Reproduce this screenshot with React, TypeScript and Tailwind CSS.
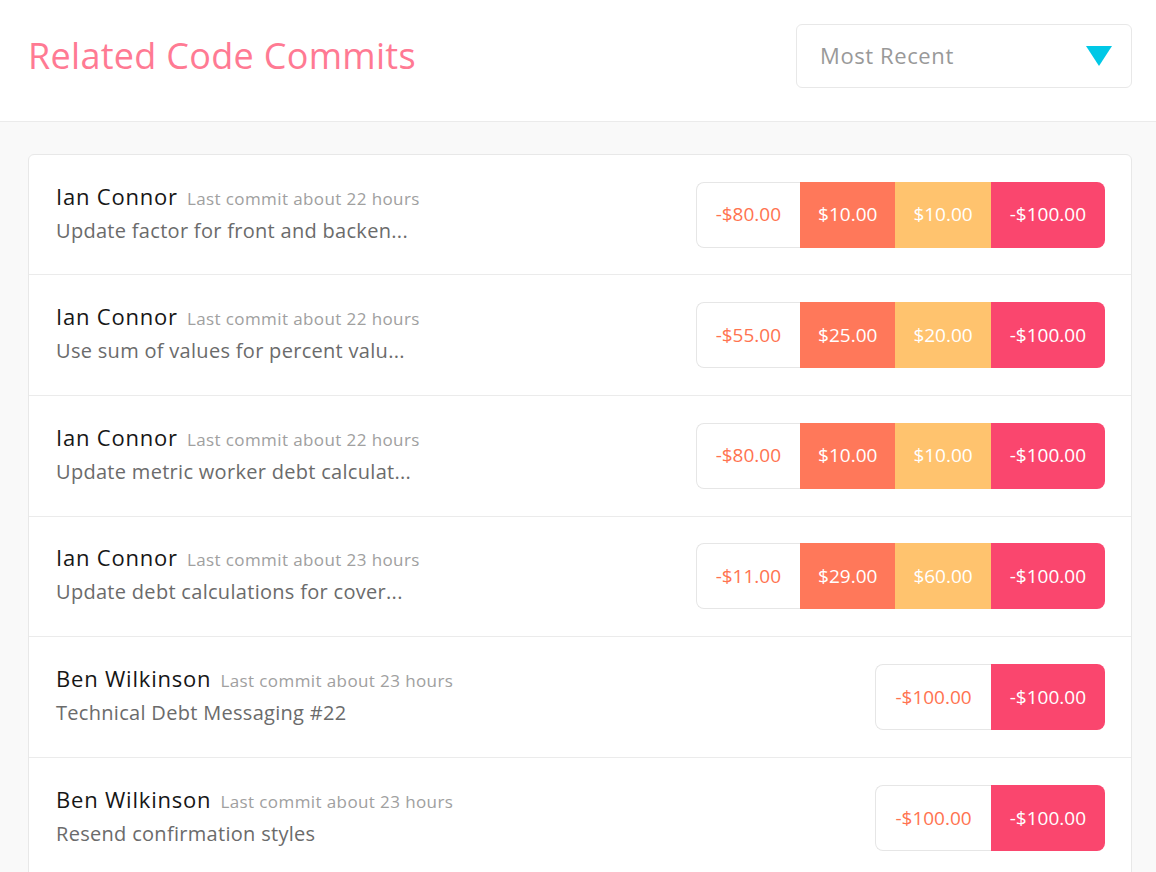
import React from "react";

type Seg = { v: string; c: "w" | "o" | "y" | "r" };
const rows: { name: string; time: string; msg: string; segs: Seg[] }[] = [
  { name: "Ian Connor", time: "Last commit about 22 hours", msg: "Update factor for front and backen...", segs: [{ v: "-$80.00", c: "w" }, { v: "$10.00", c: "o" }, { v: "$10.00", c: "y" }, { v: "-$100.00", c: "r" }] },
  { name: "Ian Connor", time: "Last commit about 22 hours", msg: "Use sum of values for percent valu...", segs: [{ v: "-$55.00", c: "w" }, { v: "$25.00", c: "o" }, { v: "$20.00", c: "y" }, { v: "-$100.00", c: "r" }] },
  { name: "Ian Connor", time: "Last commit about 22 hours", msg: "Update metric worker debt calculat...", segs: [{ v: "-$80.00", c: "w" }, { v: "$10.00", c: "o" }, { v: "$10.00", c: "y" }, { v: "-$100.00", c: "r" }] },
  { name: "Ian Connor", time: "Last commit about 23 hours", msg: "Update debt calculations for cover...", segs: [{ v: "-$11.00", c: "w" }, { v: "$29.00", c: "o" }, { v: "$60.00", c: "y" }, { v: "-$100.00", c: "r" }] },
  { name: "Ben Wilkinson", time: "Last commit about 23 hours", msg: "Technical Debt Messaging #22", segs: [{ v: "-$100.00", c: "w" }, { v: "-$100.00", c: "r" }] },
  { name: "Ben Wilkinson", time: "Last commit about 23 hours", msg: "Resend confirmation styles", segs: [{ v: "-$100.00", c: "w" }, { v: "-$100.00", c: "r" }] },
];

function Segment({ s }: { s: Seg }) {
  if (s.c === "w")
    return (
      <div className="flex h-full items-center rounded-l-[8px] border border-r-0 border-[#e6e6e6] bg-white px-[19px] text-[#ff7350]">
        {s.v}
      </div>
    );
  if (s.c === "o") return <div className="flex h-full items-center bg-[#ff785a] px-[18px] text-white">{s.v}</div>;
  if (s.c === "y") return <div className="flex h-full items-center bg-[#ffc36e] px-[18px] text-white">{s.v}</div>;
  return <div className="flex h-full items-center rounded-r-[8px] bg-[#fa466e] px-[19px] text-white">{s.v}</div>;
}

export default function App() {
  return (
    <div className="min-h-[872px] w-[1156px] bg-[#f9f9f9]" style={{ fontFamily: "'Open Sans', 'Liberation Sans', sans-serif" }}>
      <div className="flex h-[122px] items-center justify-between border-b border-[#ebebeb] bg-white pb-[10px] pl-[28px] pr-[24px]">
        <h1 className="text-[36px] font-normal tracking-[0.3px] text-[#ff7a93]">Related Code Commits</h1>
        <div className="flex h-[64px] w-[336px] items-center justify-between rounded-[6px] border border-[#e8e8e8] bg-white pl-[23px] pr-[19px]">
          <span className="text-[22px] tracking-[0.6px] text-[#999999]">Most Recent</span>
          <svg width="26" height="20" viewBox="0 0 26 20"><polygon points="0,0 26,0 13,20" fill="#00c8e6" /></svg>
        </div>
      </div>
      <div className="pl-[28px] pr-[24px] pt-[32px]">
        <div className="overflow-hidden rounded-t-[6px] border border-[#e8e8e8] bg-white">
          {rows.map((r, i) => (
            <div key={i} className={`flex items-center justify-between pl-[27px] pr-[26px] ${i > 0 ? "h-[120.75px] border-t border-[#ebebeb]" : "h-[119px]"}`}>
              <div className="flex flex-col pb-[4px]">
                <div className="flex items-baseline gap-[9px]">
                  <span className="text-[22px] tracking-[0.8px] text-[#161616]">{r.name}</span>
                  <span className="text-[17px] tracking-[0.4px] text-[#a0a0a0]">{r.time}</span>
                </div>
                <div className="mt-[3px] text-[20px] tracking-[0.3px] text-[#6b6b6b]">{r.msg}</div>
              </div>
              <div className="flex h-[66px] items-stretch text-[19px]">
                {r.segs.map((s, j) => (
                  <Segment key={j} s={s} />
                ))}
              </div>
            </div>
          ))}
        </div>
      </div>
    </div>
  );
}
